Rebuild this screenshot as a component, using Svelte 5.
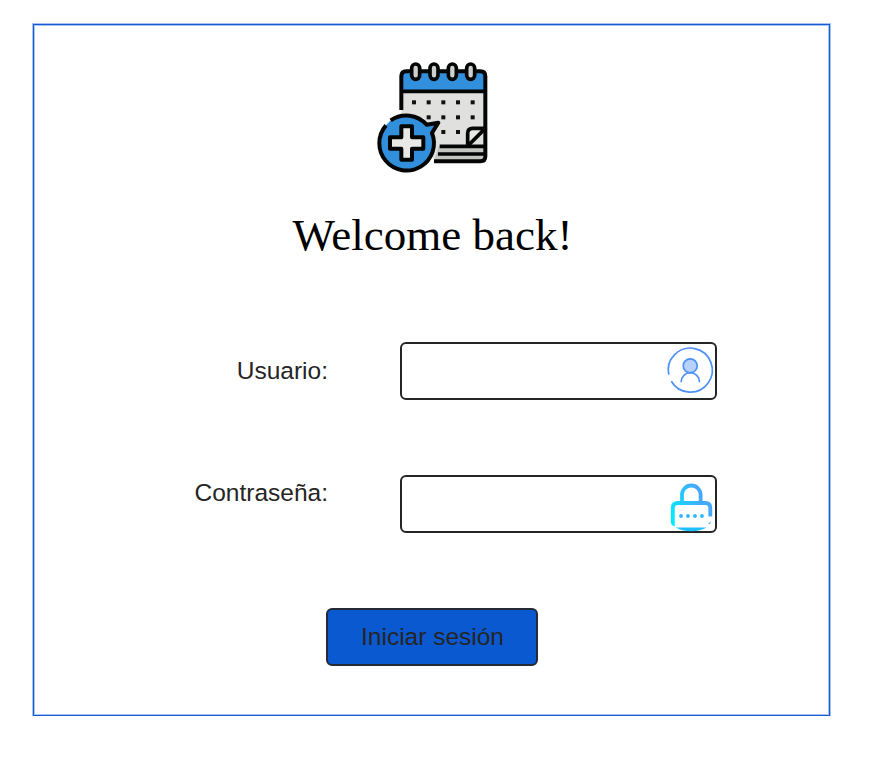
<script>
  const fields = [
    { id: 'usuario', label: 'Usuario:', type: 'text' },
    { id: 'clave', label: 'Contraseña:', type: 'password' }
  ];
  const rings = [137, 192, 247, 302];
  const dots = [
    [132, 142], [176, 142], [220, 142], [264, 142], [308, 142],
    [176, 187], [220, 187], [264, 187], [308, 187],
    [220, 231], [264, 231]
  ];
</script>

<main>
  <svg class="logo" viewBox="0 0 375 375" fill="none" stroke="#040606" stroke-width="12">
    <path d="M94 190V64q0-15 15-15h222q15 0 15 15v240q0 15-15 15H192L160 190Z" fill="#e0e0df" stroke="none" />
    <path d="M94 109V64q0-15 15-15h222q15 0 15 15v45Z" fill="#318fdb" stroke="none" />
    <path d="M206 274h140v30q0 15-15 15H192Z" fill="#c3c5c1" stroke="none" />
    <path d="M94 165V64q0-15 15-15h222q15 0 15 15v240q0 15-15 15H192" />
    <path d="M94 109H346M209 274H346M204 297H346" stroke-width="11" />
    <path d="M293 270v-35q0-15 15-15h38l-50 50" fill="#e8e8e6" stroke-linejoin="round" stroke-width="11" />
    <g fill="#cfcfcd" stroke-width="11">
      {#each rings as x}
        <rect x={x - 12} y="27" width="24" height="46" rx="12" />
      {/each}
    </g>
    <g fill="#111" stroke="none">
      {#each dots as [x, y]}
        <rect x={x - 6} y={y - 6} width="12" height="12" />
      {/each}
    </g>
    <path d="M62 196A82 82 0 0 1 170 209L205 203 186 234A82 82 0 1 1 48 211Z" fill="#318fdb" stroke="none" />
    <path d="M62 196A82 82 0 0 1 170 209L205 203 186 234A82 82 0 1 1 48 211" stroke-linejoin="round" />
    <path d="M94 214h32v33h34v34h-34v33H94v-33H60v-34h34Z" fill="#e8e8e6" stroke-linejoin="round" />
  </svg>

  <h1>Welcome back!</h1>

  <form onsubmit={(event) => event.preventDefault()}>
    {#each fields as field}
      <div class="row {field.id}">
        <label for={field.id}>{field.label}</label>
        <div class="box">
          <input id={field.id} type={field.type} />
          {#if field.id === 'usuario'}
            <svg class="icon" viewBox="0 0 48 48" fill="none" stroke="#4e91f7" stroke-width="1.7">
              <path d="M1.800 27.800A22 22 0 1 1 4.300 34.200" />
              <circle cx="23.200" cy="18.800" r="7" fill="#b8d1fb" />
              <path d="M14.200 35.300v-.5a9.100 9.100 0 0 1 18.200 0v.5" />
            </svg>
          {:else}
            <svg class="icon" viewBox="0 0 48 48" fill="none">
              <defs>
                <linearGradient id="lock" x1="4" y1="34" x2="34" y2="20" gradientUnits="userSpaceOnUse">
                  <stop offset="0" stop-color="#00eaff" />
                  <stop offset="1" stop-color="#45a9ff" />
                </linearGradient>
              </defs>
              <path d="M15 23V14.800a9.300 9.300 0 0 1 18.600 0V23M5.800 43V28q0-5 5-5h27.500q5 0 5 5v8.500" stroke="url(#lock)" stroke-width="3.800" />
              <path d="M3.900 42h3.800v4.500q-3.800-1.500-3.800-4.500Z" fill="url(#lock)" />
              <path d="M8.700 47.600h31q-6 3.700-15.500 3.700T8.700 47.600Z" fill="#1fbfff" />
              <path d="M41 43.800l3-2.600-1 2.800Z" fill="#45a9ff" />
              <g fill="#2fb8ff">
                <circle cx="14" cy="36" r="1.900" /><circle cx="21" cy="36" r="1.900" /><circle cx="28" cy="36" r="1.900" /><circle cx="35" cy="36" r="1.900" />
              </g>
            </svg>
          {/if}
        </div>
      </div>
    {/each}
    <button type="submit">Iniciar sesión</button>
  </form>
</main>

<style>
  :global(body) { margin: 0; background: #fff; }
  :global(#app) { display: flow-root; }
  main {
    box-sizing: border-box;
    width: 797px;
    height: 692px;
    margin: 24px 0 0 33px;
    padding-top: 30px;
    border: 1px solid #175bd3;
    box-shadow: 0 0 0 1px #a5c4f2, inset 0 0 0 1px #a5c4f2;
    display: flex;
    flex-direction: column;
    align-items: center;
    font-family: "Liberation Sans", Arial, sans-serif;
    color: #252525;
  }
  .logo { display: block; width: 125px; height: 125px; margin-left: 2px; }
  h1 {
    margin: 28px 0 0 2px;
    height: 54px;
    font: 400 45px/54px "Liberation Serif", "Times New Roman", serif;
    color: #000;
    white-space: nowrap;
  }
  form {
    width: 100%;
    margin-top: 80px;
    display: flex;
    flex-direction: column;
    align-items: center;
  }
  .row {
    align-self: flex-start;
    display: flex;
    gap: 72px;
    height: 58px;
    margin-bottom: 75px;
  }
  label {
    width: 294px;
    text-align: right;
    font-size: 24.5px;
    line-height: 58px;
  }
  .clave label { line-height: 36px; }
  .box {
    box-sizing: border-box;
    width: 317px;
    height: 58px;
    border: 2px solid #252525;
    border-radius: 6px;
    display: flex;
    align-items: center;
  }
  input {
    flex: 1;
    min-width: 0;
    height: 100%;
    padding: 0 12px;
    border: 0;
    outline: 0;
    background: none;
    font: 24px "Liberation Sans", Arial, sans-serif;
    box-sizing: border-box;
  }
  .icon { width: 48px; height: 48px; flex: none; overflow: visible; }
  button {
    box-sizing: border-box;
    width: 212px;
    height: 58px;
    margin-left: 1px;
    padding: 0 0 0 1px;
    border: 2px solid #252b35;
    border-radius: 6px;
    background: #0b59d1;
    color: #252525;
    font: 24.5px "Liberation Sans", Arial, sans-serif;
  }
</style>
